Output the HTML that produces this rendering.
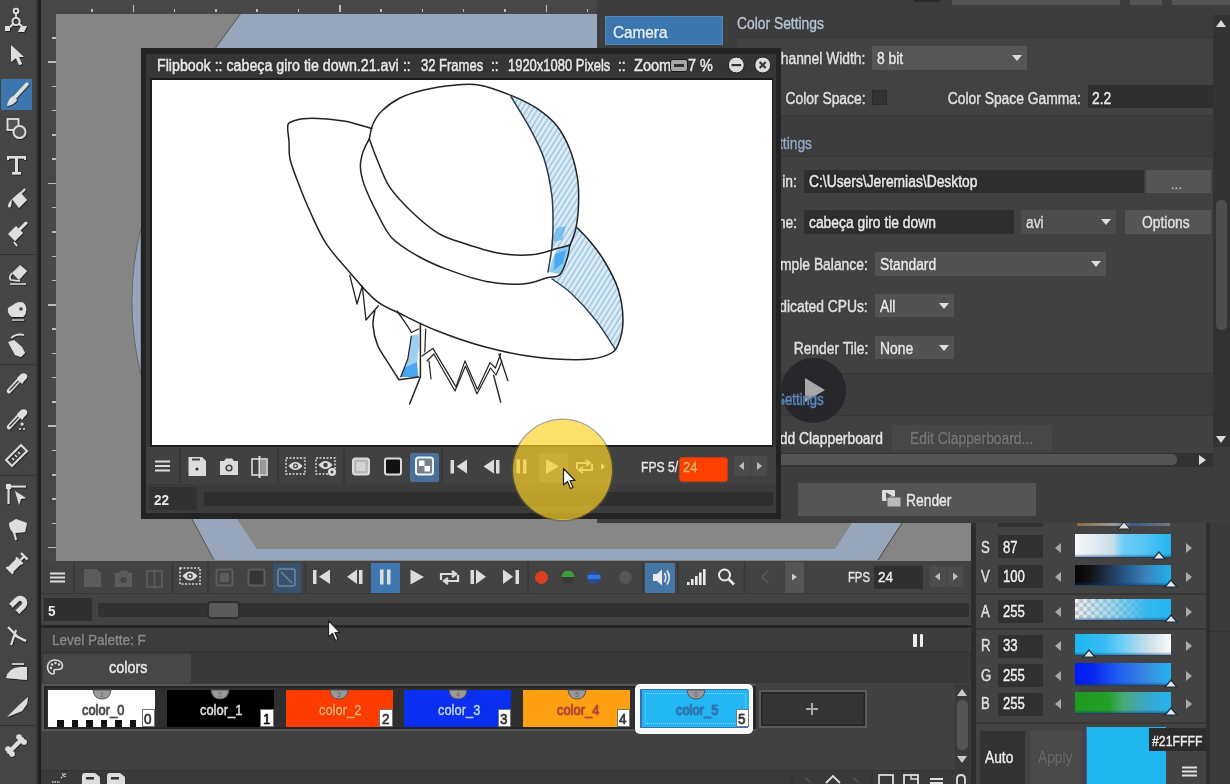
<!DOCTYPE html>
<html><head><meta charset="utf-8">
<style>
*{margin:0;padding:0;box-sizing:border-box}
html,body{width:1230px;height:784px;overflow:hidden;background:#3c3c3c;font-family:"Liberation Sans",sans-serif;color:#ddd}
.a{position:absolute}
.t{position:absolute;white-space:nowrap;line-height:1}
.s{position:absolute;white-space:nowrap;line-height:1;font-size:16px;transform:scaleX(.865);transform-origin:0 0;-webkit-text-stroke:.45px currentColor;text-shadow:0 0 1.5px rgba(0,0,0,.6)}
.r{position:absolute;white-space:nowrap;line-height:1;font-size:16px;transform:scaleX(.865);transform-origin:100% 0;-webkit-text-stroke:.45px currentColor;text-shadow:0 0 1.5px rgba(0,0,0,.6)}
</style></head>
<body>
<div class="a" style="left:0;top:0;width:36px;height:784px;background:#454545"></div>
<div class="a" style="left:37px;top:0;width:4.5px;height:784px;background:#2b2b2b"></div><div class="a" style="left:38.5px;top:0;width:2px;height:784px;background:#1f1f1f"></div>
<svg class="a" style="left:0;top:0" width="36" height="784" viewBox="0 0 36 784">
<defs><filter id="sh" x="-20%" y="-20%" width="140%" height="140%"><feDropShadow dx="0.6" dy="0.8" stdDeviation="0.5" flood-color="#111" flood-opacity="0.9"/></filter></defs>
<rect x="1" y="79" width="31" height="31" rx="1" fill="#3d75ad"/>
<g stroke="#2f2f2f" stroke-width="1"><line x1="0" y1="254.5" x2="35" y2="254.5"/><line x1="0" y1="364.5" x2="35" y2="364.5"/><line x1="0" y1="475.5" x2="35" y2="475.5"/><line x1="0" y1="725.5" x2="35" y2="725.5"/></g>
<g filter="url(#sh)" fill="#dedede" stroke="#dedede">
 <!-- animate -->
 <g fill="none" stroke-width="1.8"><circle cx="16" cy="11" r="2.3"/><circle cx="16" cy="21.5" r="3.6"/><line x1="16" y1="13.5" x2="16" y2="18"/><line x1="13" y1="24" x2="10" y2="27"/><line x1="19" y1="24" x2="22" y2="26"/></g>
 <rect x="5" y="26" width="5" height="5" fill="#dedede" stroke="none"/>
 <polygon points="21,26 27,26 24,32 18,32" stroke="none"/>
 <!-- select arrow -->
 <polygon points="11,45 24,57 19,57 22,64 19,65 16,58 11,62" stroke="none"/>
 <!-- brush -->
 <line x1="27" y1="84" x2="15" y2="97" stroke-width="3.5" stroke-linecap="round"/>
 <path d="M13 96 Q8 99 7 106 Q14 105 17 100 Z" stroke="none"/>
 <!-- geometric -->
 <rect x="7.5" y="119" width="11" height="11" fill="#555" stroke-width="1.8"/>
 <circle cx="19.5" cy="132" r="6" fill="#555" stroke-width="1.8"/>
 <!-- T -->
 <path d="M7 156 H26 V160 H24 V158.5 H18 V172 H21 V174.5 H12 V172 H15 V158.5 H9 V160 H7 Z" stroke="none"/>
 <!-- fill bucket -->
 <path d="M12 199 L20 192 L27 200 L19 208 Z" stroke="none"/>
 <line x1="17" y1="197" x2="25" y2="189" stroke-width="1.8"/>
 <path d="M12 199 Q8 203 8 206 Q9 209 11 206 Z" stroke="none"/>
 <!-- paint brush -->
 <path d="M8 234 L16 226 L23 233 L15 241 Z" stroke="none"/>
 <line x1="20" y1="229" x2="26" y2="223" stroke-width="3" stroke-linecap="round"/>
 <line x1="14" y1="242" x2="17" y2="246" stroke-width="1.5"/>
 <!-- eraser -->
 <path d="M12 273 L20 265 L27 271 L19 280 Z" stroke="none"/>
 <path d="M12 273 Q8 278 11 280 L20 281" fill="none" stroke-width="1.6"/>
 <line x1="10" y1="284" x2="26" y2="284" stroke-width="1.4"/>
 <!-- tape -->
 <path d="M8 308 L16 303 Q24 300 26 307 Q27 314 23 317 L12 317 Q7 314 8 308 Z" stroke="none"/>
 <circle cx="21" cy="309" r="1.8" fill="#444" stroke="none"/>
 <line x1="12" y1="320" x2="24" y2="320" stroke-width="1.2"/>
 <!-- smudge -->
 <path d="M8 342 L14 340 L22 347 L25 353 L21 357 L15 355 Z" stroke="none"/>
 <path d="M11 338 Q17 333 24 335" fill="none" stroke-width="1.6"/>
 <!-- picker 1 -->
 <path d="M9 391 L19 380" stroke-width="4.5" stroke-linecap="round" fill="none"/>
 <path d="M9.5 390.5 L18.5 381" stroke="#444" stroke-width="1.6" fill="none"/>
 <path d="M17 378 L21 374 Q25 372 27 375 Q28 378 24 381 L22 384 Z" stroke="none"/>
 <!-- picker 2 -->
 <path d="M9 427 L19 416" stroke-width="4.5" stroke-linecap="round" fill="none"/>
 <path d="M9.5 426.5 L18.5 417" stroke="#444" stroke-width="1.6" fill="none"/>
 <path d="M17 414 L21 410 Q25 408 27 411 Q28 414 24 417 L22 420 Z" stroke="none"/>
 <circle cx="22" cy="424" r="1.6" stroke="none"/><circle cx="20" cy="429" r="1" stroke="none"/><circle cx="24" cy="429" r="1" stroke="none"/>
 <!-- ruler -->
 <path d="M6 460 L21 445 L27 451 L12 466 Z" fill="none" stroke-width="1.8"/>
 <g stroke-width="1.2"><line x1="12" y1="458" x2="14" y2="460"/><line x1="15" y1="455" x2="17" y2="457"/><line x1="18" y1="452" x2="20" y2="454"/></g>
 <!-- control point editor -->
 <rect x="6" y="484" width="5" height="5" stroke="none"/>
 <line x1="8.5" y1="489" x2="8.5" y2="504" stroke-width="2"/>
 <line x1="11" y1="486.5" x2="26" y2="486.5" stroke-width="1.8"/>
 <polygon points="15,491 26,498 21,499 19,505" stroke="none"/>
 <!-- pinch -->
 <path d="M9 523 L16 519 L27 523 L25 532 L14 533 Q9 530 9 523 Z" stroke="none"/>
 <path d="M12 528 Q15 534 16 540" fill="none" stroke-width="1.8"/>
 <!-- pump -->
 <path d="M10 570 L19 561" stroke-width="7" stroke-linecap="butt"/>
 <path d="M6.5 567 L13 573.5 M16 557.5 L22.5 564" stroke-width="2.2"/>
 <path d="M20.5 560 L24 556.5 M21 553 L27.5 559.5" stroke-width="2.2"/>
<!-- magnet -->
 <path d="M10.5 606 L17 599.5 A4.6 4.6 0 0 1 23.5 606 L17 612.5" fill="none" stroke-width="5"/>
 <path d="M9 604.5 L12 607.5 M15.5 611 L18.5 614" stroke="#333" stroke-width="1.2"/>
<!-- bender -->
 <path d="M8 627 L18 637 M16 630 L11 645 M14 635 L26 641" fill="none" stroke-width="2"/>
 <!-- iron -->
 <path d="M6 678 Q8 668 20 667 L27 667 L27 680 Z" stroke="none"/>
 <line x1="12" y1="664" x2="24" y2="664" stroke-width="1.6"/>
 <!-- cutter -->
 <path d="M7 717 L19 705 L28 697 L27 704 L22 711 Z" stroke="none"/>
 <!-- bone -->
 <path d="M9 752 L22 739" stroke-width="4" stroke-linecap="round"/>
 <circle cx="8" cy="749" r="2.8" stroke="none"/><circle cx="12" cy="754" r="2.8" stroke="none"/>
 <circle cx="19" cy="737" r="2.8" stroke="none"/><circle cx="24" cy="742" r="2.8" stroke="none"/>
</g>
</svg>
<div class="a" style="left:41px;top:0;width:556px;height:14px;background:#474747"></div>
<div class="a" style="left:41px;top:14px;width:15px;height:547px;background:#474747"></div>
<div class="a" style="left:91.2px;top:8.5px;width:1.5px;height:3.5px;background:#bdbdbd"></div>
<div class="a" style="left:132.6px;top:5px;width:1.5px;height:7px;background:#bdbdbd"></div>
<div class="a" style="left:173.8px;top:8.5px;width:1.5px;height:3.5px;background:#bdbdbd"></div>
<div class="a" style="left:215.1px;top:8.5px;width:1.5px;height:3.5px;background:#bdbdbd"></div>
<div class="a" style="left:256.4px;top:8.5px;width:1.5px;height:3.5px;background:#bdbdbd"></div>
<div class="a" style="left:297.8px;top:8.5px;width:1.5px;height:3.5px;background:#bdbdbd"></div>
<div class="a" style="left:339.0px;top:5px;width:1.5px;height:7px;background:#bdbdbd"></div>
<div class="a" style="left:380.3px;top:8.5px;width:1.5px;height:3.5px;background:#bdbdbd"></div>
<div class="a" style="left:421.6px;top:8.5px;width:1.5px;height:3.5px;background:#bdbdbd"></div>
<div class="a" style="left:462.9px;top:8.5px;width:1.5px;height:3.5px;background:#bdbdbd"></div>
<div class="a" style="left:504.2px;top:8.5px;width:1.5px;height:3.5px;background:#bdbdbd"></div>
<div class="a" style="left:545.5px;top:5px;width:1.5px;height:7px;background:#bdbdbd"></div>
<div class="a" style="left:586.8px;top:8.5px;width:1.5px;height:3.5px;background:#bdbdbd"></div>
<div class="a" style="left:51.5px;top:37.0px;width:4px;height:1.5px;background:#bdbdbd"></div>
<div class="a" style="left:48.0px;top:61.2px;width:7.5px;height:1.5px;background:#bdbdbd"></div>
<div class="a" style="left:51.5px;top:85.5px;width:4px;height:1.5px;background:#bdbdbd"></div>
<div class="a" style="left:51.5px;top:109.8px;width:4px;height:1.5px;background:#bdbdbd"></div>
<div class="a" style="left:51.5px;top:134.1px;width:4px;height:1.5px;background:#bdbdbd"></div>
<div class="a" style="left:51.5px;top:158.4px;width:4px;height:1.5px;background:#bdbdbd"></div>
<div class="a" style="left:48.0px;top:182.6px;width:7.5px;height:1.5px;background:#bdbdbd"></div>
<div class="a" style="left:51.5px;top:206.9px;width:4px;height:1.5px;background:#bdbdbd"></div>
<div class="a" style="left:51.5px;top:231.2px;width:4px;height:1.5px;background:#bdbdbd"></div>
<div class="a" style="left:51.5px;top:255.5px;width:4px;height:1.5px;background:#bdbdbd"></div>
<div class="a" style="left:51.5px;top:279.8px;width:4px;height:1.5px;background:#bdbdbd"></div>
<div class="a" style="left:48.0px;top:304.0px;width:7.5px;height:1.5px;background:#bdbdbd"></div>
<div class="a" style="left:51.5px;top:328.3px;width:4px;height:1.5px;background:#bdbdbd"></div>
<div class="a" style="left:51.5px;top:352.6px;width:4px;height:1.5px;background:#bdbdbd"></div>
<div class="a" style="left:51.5px;top:376.9px;width:4px;height:1.5px;background:#bdbdbd"></div>
<div class="a" style="left:51.5px;top:401.2px;width:4px;height:1.5px;background:#bdbdbd"></div>
<div class="a" style="left:48.0px;top:425.4px;width:7.5px;height:1.5px;background:#bdbdbd"></div>
<div class="a" style="left:51.5px;top:449.7px;width:4px;height:1.5px;background:#bdbdbd"></div>
<div class="a" style="left:51.5px;top:474.0px;width:4px;height:1.5px;background:#bdbdbd"></div>
<div class="a" style="left:51.5px;top:498.3px;width:4px;height:1.5px;background:#bdbdbd"></div>
<div class="a" style="left:51.5px;top:522.6px;width:4px;height:1.5px;background:#bdbdbd"></div>
<div class="a" style="left:48.0px;top:546.8px;width:7.5px;height:1.5px;background:#bdbdbd"></div>
<div class="a" style="left:56px;top:14px;width:915px;height:547px;background:#858585;overflow:hidden">
<svg class="a" style="left:0;top:0" width="915" height="547">
<polygon points="185,-1 150,47 150,400 136,505 158,546 822,546 846,509 846,-1" fill="#98a6bb"/>
<polygon points="150,400 181,505 201,535 779,535 796,509 796,400" fill="#878787"/>
<path d="M185,-1 L150,47" stroke="#555" stroke-width="1" fill="none"/>
<path d="M136,505 L158,546" stroke="#555" stroke-width="1" fill="none"/>
<path d="M822,546 L846,509" stroke="#444" stroke-width="1" fill="none"/>
<path d="M85,214 Q67,287 85,361 Z" fill="#98a6bb" stroke="#5a5a5a" stroke-width="0.8"/>
</svg></div><div class="a" style="left:597px;top:0;width:633px;height:523px;background:#3d3d3d"></div>
<!-- top partial widgets -->
<div class="a" style="left:952px;top:0;width:168px;height:5px;background:#555;border-radius:0 0 2px 2px"></div>
<div class="a" style="left:1130px;top:0;width:32px;height:5px;background:#555"></div>
<div class="a" style="left:1172px;top:0;width:58px;height:5px;background:#555"></div>
<div class="a" style="left:914px;top:0;width:26px;height:2px;background:#2a2a2a"></div>
<!-- camera button -->
<div class="a" style="left:605px;top:16px;width:118px;height:29px;background:#3b76ae;border:1px solid #4f87bd"></div>
<div class="s" style="left:613px;top:24px;color:#dfeefa;font-size:17px;transform:scaleX(.9)">Camera</div>
<div class="s" style="left:737px;top:16px;color:#b4c2d0">Color Settings</div>
<!-- box 1 -->
<div class="a" style="left:737px;top:37px;width:476px;height:79px;background:#424242;border-top:1px solid #363636;border-bottom:1px solid #363636"></div>
<div class="r" style="right:365px;top:51px;color:#e0e0e0">Channel Width:</div>
<div class="a" style="left:872px;top:46px;width:155px;height:24px;background:#565656"></div>
<div class="s" style="left:877px;top:51px;color:#e8e8e8">8 bit</div>
<svg class="a" style="left:1012px;top:55px" width="10" height="6"><polygon points="0,0 10,0 5,6" fill="#ddd"/></svg>
<div class="r" style="right:365px;top:91px;color:#e0e0e0">Color Space:</div>
<div class="a" style="left:872px;top:90px;width:15px;height:15px;background:#333;border:1px solid #2c2c2c"></div>
<div class="r" style="right:149px;top:91px;color:#e0e0e0">Color Space Gamma:</div>
<div class="a" style="left:1088px;top:85px;width:125px;height:23px;background:#2f2f2f"></div>
<div class="s" style="left:1092px;top:91px;color:#e8e8e8">2.2</div>
<!-- file settings header -->
<div class="r" style="right:418px;top:136px;color:#93a8c0">File Settings</div>
<div class="a" style="left:737px;top:156px;width:476px;height:218px;background:#414141;border-top:1px solid #363636;border-bottom:1px solid #363636"></div>
<div class="r" style="right:433px;top:174px;color:#e0e0e0">Save in:</div>
<div class="a" style="left:804px;top:170px;width:340px;height:23px;background:#2e2e2e"></div>
<div class="s" style="left:809px;top:174px;color:#e8e8e8">C:\Users\Jeremias\Desktop</div>
<div class="a" style="left:1146px;top:170px;width:65px;height:23px;background:#555"></div>
<div class="t" style="left:1171px;top:178px;font-size:13px;color:#ddd">...</div>
<div class="r" style="right:433px;top:215px;color:#e0e0e0">Name:</div>
<div class="a" style="left:804px;top:210px;width:210px;height:24px;background:#2e2e2e"></div>
<div class="s" style="left:809px;top:215px;color:#e8e8e8">cabeça giro tie down</div>
<div class="a" style="left:1021px;top:210px;width:95px;height:24px;background:#4c4c4c"></div>
<div class="s" style="left:1026px;top:215px;color:#ddd">avi</div>
<svg class="a" style="left:1101px;top:219px" width="10" height="6"><polygon points="0,0 10,0 5,6" fill="#ddd"/></svg>
<div class="a" style="left:1125px;top:210px;width:86px;height:24px;background:#555"></div>
<div class="s" style="left:1142px;top:215px;color:#e0e0e0">Options</div>
<div class="r" style="right:362px;top:257px;color:#e0e0e0">Resample Balance:</div>
<div class="a" style="left:875px;top:252px;width:231px;height:24px;background:#525252"></div>
<div class="s" style="left:880px;top:257px;color:#e8e8e8">Standard</div>
<svg class="a" style="left:1091px;top:261px" width="10" height="6"><polygon points="0,0 10,0 5,6" fill="#ddd"/></svg>
<div class="r" style="right:362px;top:299px;color:#e0e0e0">Dedicated CPUs:</div>
<div class="a" style="left:875px;top:294px;width:79px;height:23px;background:#525252"></div>
<div class="s" style="left:880px;top:299px;color:#e8e8e8">All</div>
<svg class="a" style="left:939px;top:303px" width="10" height="6"><polygon points="0,0 10,0 5,6" fill="#ddd"/></svg>
<div class="r" style="right:362px;top:341px;color:#e0e0e0">Render Tile:</div>
<div class="a" style="left:875px;top:336px;width:79px;height:23px;background:#525252"></div>
<div class="s" style="left:880px;top:341px;color:#e8e8e8">None</div>
<svg class="a" style="left:939px;top:345px" width="10" height="6"><polygon points="0,0 10,0 5,6" fill="#ddd"/></svg>
<div class="r" style="right:407px;top:392px;color:#7f9bbb">More Settings</div>
<div class="a" style="left:737px;top:415px;width:476px;height:40px;background:#414141;border-top:1px solid #363636"></div>
<div class="r" style="right:347px;top:431px;color:#e6e6e6">Add Clapperboard</div>
<div class="a" style="left:892px;top:425px;width:160px;height:25px;background:#474747"></div>
<div class="s" style="left:910px;top:431px;color:#777">Edit Clapperboard...</div>
<!-- vertical scrollbar -->
<div class="a" style="left:1213px;top:15px;width:17px;height:432px;background:#333"></div>
<svg class="a" style="left:1216px;top:20px" width="10" height="7"><polygon points="0,7 10,7 5,0" fill="#ddd"/></svg>
<svg class="a" style="left:1216px;top:436px" width="10" height="7"><polygon points="0,0 10,0 5,7" fill="#ddd"/></svg>
<div class="a" style="left:1216px;top:200px;width:11px;height:130px;background:#4e4e4e;border-radius:5px"></div>
<!-- horizontal scrollbar -->
<div class="a" style="left:737px;top:453px;width:476px;height:14px;background:#333"></div>
<div class="a" style="left:775px;top:454px;width:402px;height:11px;background:#555;border-radius:5px"></div>
<svg class="a" style="left:1199px;top:455px" width="7" height="10"><polygon points="0,0 7,5 0,10" fill="#ddd"/></svg>
<!-- render button -->
<div class="a" style="left:798px;top:483px;width:238px;height:33px;background:#555"></div>
<svg class="a" style="left:881px;top:489px" width="22" height="20"><rect x="1" y="1" width="13" height="11" rx="1" fill="#ddd"/><polygon points="5,3.5 11,6.5 5,9.5" fill="#555"/><rect x="6" y="8" width="14" height="10" rx="1" fill="#bbb" stroke="#555" stroke-width="1"/></svg>
<div class="s" style="left:906px;top:493px;color:#e8e8e8">Render</div>
<!-- flipbook window -->
<div class="a" style="left:141px;top:48px;width:640px;height:471px;background:#232323"></div>
<div class="a" style="left:146px;top:54px;width:630px;height:459px;background:#363636"></div>
<div class="a" style="left:150px;top:78px;width:623px;height:369px;background:#1c1c1c"></div>
<div class="a" style="left:152px;top:80px;width:620px;height:365px;background:#fff"></div>
<div class="a" style="left:146px;top:447px;width:630px;height:37px;background:#414141"></div>
<div class="a" style="left:146px;top:484px;width:630px;height:29px;background:#3c3c3c"></div>
<div class="a" style="left:149px;top:487px;width:48px;height:23px;background:#323232"></div>
<div class="a" style="left:204px;top:492px;width:569px;height:14px;background:#2f2f2f"></div>
<div class="t" style="left:154px;top:492px;font-size:15px;font-weight:bold;color:#e8e8e8;transform:scaleX(.9);transform-origin:0 0">22</div>
<!-- title -->
<div class="s" style="left:156.5px;top:57.5px;color:#e8e8e8;-webkit-text-stroke:.5px #e8e8e8;transform:scaleX(.888)">Flipbook :: cabeça giro tie down.21.avi</div>
<div class="s" style="left:403px;top:57.5px;color:#e8e8e8;-webkit-text-stroke:.5px #e8e8e8">::</div>
<div class="s" style="left:420.5px;top:57.5px;color:#e8e8e8;-webkit-text-stroke:.5px #e8e8e8;transform:scaleX(.813)">32 Frames</div>
<div class="s" style="left:490.5px;top:57.5px;color:#e8e8e8;-webkit-text-stroke:.5px #e8e8e8">::</div>
<div class="s" style="left:507.5px;top:57.5px;color:#e8e8e8;-webkit-text-stroke:.5px #e8e8e8;transform:scaleX(.81)">1920x1080 Pixels</div>
<div class="s" style="left:617.5px;top:57.5px;color:#e8e8e8;-webkit-text-stroke:.5px #e8e8e8">::</div>
<div class="s" style="left:633.5px;top:57.5px;color:#e8e8e8;-webkit-text-stroke:.5px #e8e8e8;transform:scaleX(.91)">Zoom</div>
<div class="s" style="left:687.5px;top:57.5px;color:#e8e8e8;-webkit-text-stroke:.5px #e8e8e8;transform:scaleX(.9)">7 %</div>
<div class="a" style="left:670px;top:59px;width:18px;height:13px;background:#a8a8a8;border:1.5px solid #1e1e1e;border-radius:3px"></div>
<div class="a" style="left:674px;top:64px;width:10px;height:3px;background:#333"></div>
<svg class="a" style="left:726px;top:55px" width="48" height="20">
 <circle cx="10.3" cy="10" r="8" fill="#dadada" stroke="#1a1a1a" stroke-width="1"/>
 <rect x="5.5" y="9" width="9.6" height="2.2" fill="#333"/>
 <circle cx="36.7" cy="10" r="8" fill="#dadada" stroke="#1a1a1a" stroke-width="1"/>
 <path d="M33.7 7 L39.7 13 M39.7 7 L33.7 13" stroke="#333" stroke-width="2.2"/>
</svg>
<!-- toolbar separators -->
<div class="a" style="left:179px;top:449px;width:2px;height:34px;background:#363636"></div>
<div class="a" style="left:277px;top:449px;width:2px;height:34px;background:#363636"></div>
<div class="a" style="left:343px;top:449px;width:2px;height:34px;background:#363636"></div>
<div class="a" style="left:441px;top:449px;width:2px;height:34px;background:#363636"></div>
<div class="a" style="left:409.5px;top:453px;width:29.5px;height:29px;background:#4a6f9a;border-radius:2px"></div>
<div class="a" style="left:539px;top:453px;width:29px;height:29px;background:#5a5a5a"></div>
<svg class="a" style="left:146px;top:447px" width="630" height="37">
<g fill="#dcdcdc" stroke="#dcdcdc">
 <!-- hamburger -->
 <g stroke-width="2"><line x1="9" y1="14.5" x2="24" y2="14.5"/><line x1="9" y1="19" x2="24" y2="19"/><line x1="9" y1="23.5" x2="24" y2="23.5"/></g>
 <!-- save -->
 <path d="M42.5 10 H56 L60 14 V29 H42.5 Z" stroke="none"/>
 <rect x="46" y="11.5" width="8" height="2" fill="#414141" stroke="none"/>
 <circle cx="51" cy="22" r="1.6" fill="#333" stroke="none"/>
 <!-- camera -->
 <path d="M74 14 H78 L80 11.5 H86 L88 14 H92 V28 H74 Z" stroke="none"/>
 <circle cx="83" cy="21" r="3.6" fill="#444" stroke="none"/><circle cx="83" cy="21" r="2" fill="#dcdcdc" stroke="none"/>
 <!-- compare -->
 <rect x="106" y="12" width="15" height="16" fill="none" stroke-width="1.6"/>
 <line x1="113.5" y1="9" x2="113.5" y2="31" stroke-width="2"/>
 <rect x="115" y="13" width="5" height="14" fill="#999" stroke="none"/>
 <!-- eye dashed -->
 <rect x="140" y="11" width="19" height="16" fill="none" stroke-width="1.4" stroke-dasharray="2 1.5"/>
 <path d="M142.5 19 Q149.5 11 156.5 19 Q149.5 27 142.5 19 Z" stroke="none"/>
 <circle cx="149.5" cy="19" r="2.5" fill="#444" stroke="none"/><circle cx="149.5" cy="19" r="1.2" stroke="none"/>
 <!-- eye2 dashed -->
 <rect x="170" y="11" width="19" height="16" fill="none" stroke-width="1.4" stroke-dasharray="2 1.5"/>
 <path d="M172.5 18 Q179.5 10 186.5 18 Q179.5 26 172.5 18 Z" stroke="none"/>
 <circle cx="179.5" cy="18" r="2.3" fill="#444" stroke="none"/>
 <circle cx="186" cy="25" r="4" stroke="none"/><circle cx="186" cy="25" r="1.5" fill="#444" stroke="none"/>
 <!-- square gray -->
 <rect x="207" y="11.5" width="16" height="16" rx="2.5" fill="#b8b8b8" stroke-width="2"/><rect x="210.5" y="15" width="9" height="9" fill="#d4d4d4" stroke="none"/>
 <!-- square black -->
 <rect x="239" y="11.5" width="16" height="16" rx="2" fill="#111" stroke-width="2"/>
 <!-- checker (in blue) -->
 <rect x="270" y="10.5" width="17" height="17" rx="2.5" fill="#7a8088" stroke="#eaf4ff" stroke-width="2"/>
 <rect x="273" y="13.5" width="5.5" height="5.5" fill="#fff" stroke="none"/><rect x="278.5" y="19" width="5.5" height="5.5" fill="#fff" stroke="none"/>
 <!-- first frame -->
 <rect x="304.5" y="13" width="3.5" height="13.5" stroke="none"/>
 <polygon points="321,12.5 321,26.5 310.5,19.5" stroke="none"/>
 <!-- prev frame -->
 <polygon points="348,12.5 348,26.5 337.5,19.5" stroke="none"/>
 <rect x="350" y="13" width="3.5" height="13.5" stroke="none"/>
 <!-- pause -->
 <rect x="370.5" y="12.5" width="3.5" height="14" stroke="none"/><rect x="377" y="12.5" width="3.5" height="14" stroke="none"/>
 <!-- play -->
 <polygon points="400,12 400,27 413,19.5" stroke="none"/>
 <!-- loop -->
 <path d="M431 22 V16 H443 M440 13 L444 16 L440 19 M446 17 V23 H434 M437 26 L433 23 L437 20" fill="none" stroke-width="2"/>
 <!-- small next -->
 <polygon points="455,16 455,23 459,19.5" stroke="none"/>
</g>
</svg>
<!-- FPS -->
<div class="s" style="left:640.5px;top:459px;color:#e4e4e4;font-size:15px;transform:scaleX(.81)">FPS 5/</div>
<div class="a" style="left:678.5px;top:456.5px;width:49px;height:25px;background:#ff4000;border:1px solid #c83a14;border-radius:3px"></div>
<div class="s" style="left:683px;top:459px;color:#f0b860;font-size:15px">24</div>
<div class="a" style="left:734px;top:456px;width:16px;height:20px;background:#4a4a4a"></div>
<div class="a" style="left:751px;top:456px;width:16px;height:20px;background:#4a4a4a"></div>
<svg class="a" style="left:734px;top:456px" width="33" height="20"><polygon points="10,6 10,14 5,10" fill="#bbb"/><polygon points="23,6 23,14 28,10" fill="#bbb"/></svg>
<svg class="a" style="left:152px;top:80px" width="620" height="365" viewBox="152 80 620 365">
<defs>
<pattern id="hatch" width="4.5" height="4.5" patternUnits="userSpaceOnUse" patternTransform="rotate(-58)">
<rect width="4.5" height="4.5" fill="#dcebf5"/><line x1="0" y1="1" x2="4.5" y2="1" stroke="#9cc6e2" stroke-width="1.5"/>
</pattern>
</defs>
<g fill="url(#hatch)" stroke="none">
<path d="M511.0,95.4 C515.2,97.5 528.8,103.1 536.5,108.2 C544.2,113.3 551.5,119.2 557.0,126.0 C562.5,132.8 566.3,140.5 569.7,149.0 C573.1,157.5 575.8,168.1 577.3,177.0 C578.8,185.9 578.8,194.1 578.6,202.6 C578.4,211.1 577.5,220.8 576.0,228.0 C574.5,235.2 570.8,243.0 569.7,246.0 L569.7,246.0 C566.7,246.4 554.6,251.5 551.8,248.5 C549.0,245.5 553.0,236.9 553.0,228.0 C553.0,219.1 553.3,206.5 551.8,195.0 C550.3,183.5 547.6,169.9 544.2,159.2 C540.8,148.5 536.9,141.4 531.4,131.0 C525.9,120.6 514.4,102.4 511.0,96.7 Z"/>
<path d="M569.7,246.0 C571.0,243.0 574.1,229.0 577.3,228.0 C580.5,227.0 584.4,234.8 588.8,240.0 C593.1,245.2 598.5,251.4 603.4,259.5 C608.3,267.6 614.7,278.6 618.0,288.8 C621.3,299.0 623.0,311.1 623.0,320.5 C623.0,329.9 619.2,340.1 618.0,345.0 C616.8,349.9 616.0,349.0 615.6,349.8 L615.6,349.8 C612.3,344.9 603.3,329.9 596.0,320.5 C588.7,311.1 579.0,300.6 571.7,293.7 C564.4,286.8 555.3,281.4 552.0,279.0 L559.5,275 L566.8,259.5 Z"/>
</g>
<path d="M557,250 L569,246 L566,260 L560,274 L549,272 L553,258 Z" fill="#8ccaf0"/>
<path d="M555,254 L566,250 L563,263 L554,270 Z" fill="#49a8f0"/>
<path d="M556,228 L566,226 L562,240 L553,242 Z" fill="#6ab8ee" opacity=".8"/>
<path d="M411,336 L418.6,334 L419,345 L416.8,364.6 L418.6,377 L400.7,377 L407.8,359 Z" fill="#9ccff0"/>
<path d="M404,368 L417,362 L418,377 L401,377 Z" fill="#4aa6ee"/>
<g fill="none" stroke="#222" stroke-width="1.5" stroke-linecap="round" stroke-linejoin="round">
<path d="M371.8,128.6 C367.1,127.3 354.4,122.7 343.8,121.0 C333.2,119.3 316.9,118.2 308.0,118.4 C299.1,118.6 293.6,120.6 290.2,122.2 C286.8,123.8 287.9,124.8 287.7,128.0 C287.5,131.2 288.6,136.1 289.0,141.3 C289.4,146.5 288.5,152.2 290.0,159.0 C291.5,165.8 294.5,173.0 297.9,182.0 C301.3,191.0 305.9,202.6 310.6,212.8 C315.3,223.0 319.6,233.6 326.0,243.4 C332.4,253.2 340.6,261.9 348.9,271.4 C357.2,280.9 367.0,293.3 375.7,300.4 C384.4,307.5 390.7,308.9 401.0,314.0 C411.3,319.1 423.4,325.4 437.6,331.0 C451.8,336.6 470.1,343.0 486.3,347.3 C502.5,351.6 518.7,355.0 535.0,357.0 C551.3,359.0 571.8,359.9 584.0,359.5 C596.2,359.1 602.6,357.0 608.3,354.6 C614.0,352.2 615.5,350.7 618.0,345.0 C620.5,339.3 623.0,329.9 623.0,320.5 C623.0,311.1 621.3,299.0 618.0,288.8 C614.7,278.6 608.3,267.6 603.4,259.5 C598.5,251.4 593.1,245.2 588.8,240.0 C584.4,234.8 579.2,230.0 577.3,228.0"/>
<path d="M369.3,138.8 C369.9,136.3 370.9,128.7 373.0,124.0 C375.1,119.3 377.5,115.0 382.0,110.7 C386.5,106.4 393.2,101.4 400.0,98.0 C406.8,94.6 414.0,92.4 422.9,90.3 C431.8,88.2 444.0,86.0 453.5,85.2 C463.0,84.4 470.4,83.5 480.0,85.2 C489.6,86.9 501.6,91.6 511.0,95.4 C520.4,99.2 528.8,103.1 536.5,108.2 C544.2,113.3 551.5,119.2 557.0,126.0 C562.5,132.8 566.3,140.5 569.7,149.0 C573.1,157.5 575.8,168.1 577.3,177.0 C578.8,185.9 578.8,194.1 578.6,202.6 C578.4,211.1 577.5,220.8 576.0,228.0 C574.5,235.2 570.8,243.0 569.7,246.0"/>
<path d="M369.3,138.8 C370.6,142.2 373.6,151.1 377.0,159.2 C380.4,167.3 383.8,178.3 389.7,187.2 C395.6,196.1 404.6,205.1 412.7,212.8 C420.8,220.5 430.1,228.3 438.0,233.2 C445.9,238.1 450.0,238.7 460.0,242.0 C470.0,245.3 486.1,250.9 498.0,253.0 C509.9,255.1 521.6,255.6 531.4,254.8 C541.2,254.1 550.6,250.1 557.0,248.5 C563.4,246.9 567.6,245.6 569.7,245.0"/>
<path d="M369.3,138.8 C368.2,141.0 364.5,147.3 363.0,152.0 C361.5,156.7 360.2,161.4 360.4,166.8 C360.6,172.2 361.4,177.0 364.2,184.7 C367.0,192.4 372.3,203.9 377.0,212.8 C381.7,221.7 385.4,231.1 392.2,238.3 C399.0,245.5 408.9,250.9 417.8,256.0 C426.7,261.1 434.4,264.6 445.8,268.9 C457.2,273.1 473.4,279.0 486.3,281.5 C499.2,284.0 512.8,284.6 523.0,284.0 C533.2,283.4 541.2,279.3 547.3,277.8 C553.4,276.3 556.2,278.1 559.5,275.0 C562.8,271.9 565.1,264.3 566.8,259.5 C568.5,254.7 569.2,248.2 569.7,246.0"/>
<path d="M511.0,96.7 C514.4,102.4 525.9,120.6 531.4,131.0 C536.9,141.4 540.8,148.5 544.2,159.2 C547.6,169.9 550.3,183.5 551.8,195.0 C553.3,206.5 553.0,219.1 553.0,228.0 C553.0,236.9 552.6,241.2 551.8,248.5 C551.0,255.8 548.6,268.1 548.0,272.0" stroke="#2a3a4a"/>
<path d="M552.0,279.0 C555.3,281.4 564.4,286.8 571.7,293.7 C579.0,300.6 588.7,311.1 596.0,320.5 C603.3,329.9 612.3,344.9 615.6,349.8" stroke="#2a3a4a" stroke-width="1.3"/>
<path d="M349.8,275.4 L357,304 L362.3,286 L366,320 L378.4,305.7" stroke-width="1.3"/>
<path d="M374.8,311.0 C374.5,313.4 372.6,319.7 373.0,325.4 C373.4,331.1 375.0,338.8 377.5,345.0 C380.0,351.2 384.6,357.1 388.2,362.9 C391.8,368.7 397.2,377.0 399.0,379.8 L418.6,377"/>
<path d="M397,311 C402,318 408,326 411.4,332.5 L418.6,329" stroke-width="1.3"/>
<path d="M411.4,336 L407.8,359 L400.7,377" stroke-width="1.2"/>
<path d="M420.4,323.6 L420.4,377 L409.6,404" stroke-width="1.5"/>
<path d="M425.7,329 L424.8,352" stroke-width="1.2"/>
<path d="M422,356 L432.9,348.4 L456,386.9 L465,360.9 L477.5,389.4 L490,362.6 L495.4,368 L500.7,353.7" stroke-width="1.2"/>
<path d="M427,361 L433.9,354 L455,391 L465.5,366 L477,394 L490.5,368 L496,375 L502,361" stroke-width="1.2"/>
<path d="M429,361 L431,379" stroke-width="1.2"/>
<path d="M499,354 L507.9,380.7" stroke-width="1.3"/>
<path d="M493.6,375.4 L500.7,402" stroke-width="1.4"/>
</g>
</svg><!-- viewer toolbar -->
<div class="a" style="left:41px;top:561px;width:930px;height:33px;background:#434343;border-bottom:1px solid #393939"></div>
<div class="a" style="left:41px;top:594px;width:930px;height:31px;background:#434343"></div>
<div class="a" style="left:44px;top:598px;width:48px;height:23px;background:#303030"></div>
<div class="t" style="left:48px;top:603px;font-size:15px;font-weight:bold;color:#e8e8e8;transform:scaleX(.9);transform-origin:0 0">5</div>
<div class="a" style="left:98px;top:603px;width:871px;height:14px;background:#323232"></div>
<div class="a" style="left:207px;top:600.5px;width:33px;height:18px;background:#5a5a5a;border:2px solid #2e2e2e;border-radius:4px"></div>
<div class="a" style="left:41px;top:625px;width:930px;height:3px;background:#282828"></div>
<g></g>
<svg class="a" style="left:41px;top:561px" width="930" height="33">
<g stroke="#363636" stroke-width="1.5"><line x1="33" y1="1" x2="33" y2="32"/><line x1="131.5" y1="1" x2="131.5" y2="32"/><line x1="167" y1="1" x2="167" y2="32"/><line x1="264.5" y1="1" x2="264.5" y2="32"/><line x1="487" y1="1" x2="487" y2="32"/><line x1="602" y1="1" x2="602" y2="32"/><line x1="637" y1="1" x2="637" y2="32"/><line x1="703.5" y1="1" x2="703.5" y2="32"/></g>
<rect x="232" y="2" width="28" height="30" fill="#3b526c"/>
<rect x="330" y="2" width="29" height="30" fill="#3f78b0"/>
<rect x="604" y="2" width="30" height="30" fill="#4676a6"/>
<rect x="744" y="1" width="19" height="31" fill="#555"/>
<g stroke-width="2" stroke="#dcdcdc"><line x1="9" y1="12.5" x2="24" y2="12.5"/><line x1="9" y1="16.5" x2="24" y2="16.5"/><line x1="9" y1="20.5" x2="24" y2="20.5"/></g>
<g fill="#5c5c5c" stroke="#5c5c5c">
 <path d="M43 8 H56 L60 12 V26 H43 Z" stroke="none"/>
 <path d="M74 12 H78 L80 9.5 H86 L88 12 H91 V26 H74 Z" stroke="none"/><circle cx="82.5" cy="19" r="3" fill="#434343" stroke="none"/>
 <rect x="106" y="10" width="15" height="16" fill="none" stroke-width="1.6"/><line x1="113.5" y1="8" x2="113.5" y2="28" stroke-width="1.6"/>
 <rect x="175.5" y="8.5" width="16" height="16" rx="1.5" fill="none" stroke-width="2"/><rect x="179" y="12" width="9" height="9" stroke="none"/>
 <rect x="207.5" y="8.5" width="16" height="16" rx="2" fill="#363636" stroke-width="2"/>
 <rect x="237" y="8" width="17" height="17" rx="2" fill="none" stroke="#6a86a6" stroke-width="1.6"/><path d="M240 11 L251 22" stroke="#6a86a6" stroke-width="1.4"/>
</g>
<g fill="#dcdcdc" stroke="#dcdcdc">
 <rect x="139" y="7" width="20" height="16" fill="none" stroke-width="1.5" stroke-dasharray="2 1.5"/>
 <path d="M141.5 15 Q149 6 156.5 15 Q149 24 141.5 15 Z" stroke="none"/>
 <circle cx="149" cy="15" r="2.8" fill="#434343" stroke="none"/><circle cx="149" cy="15" r="1.3" stroke="none"/>
 <rect x="272" y="9" width="3.5" height="14" stroke="none"/><polygon points="289,8.5 289,23 278,15.7" stroke="none"/>
 <polygon points="316,8.5 316,23 306,15.7" stroke="none"/><rect x="318" y="9" width="3.5" height="14" stroke="none"/>
 <rect x="339" y="8.5" width="3.5" height="15" stroke="none"/><rect x="346" y="8.5" width="3.5" height="15" stroke="none"/>
 <polygon points="369.5,8.5 369.5,23.5 383,16" stroke="none"/>
 <path d="M400 19 V13 H414 M411 10 L415 13 L411 16 M417 14 V20 H404 M407 23 L403 20 L407 17" fill="none" stroke-width="2.2"/>
 <rect x="429.5" y="9" width="3.5" height="14" stroke="none"/><polygon points="435,8.5 435,23 445,15.7" stroke="none"/>
 <polygon points="462,8.5 462,23 472,15.7" stroke="none"/><rect x="474.5" y="9" width="3.5" height="14" stroke="none"/>
</g>
<circle cx="500.5" cy="16.5" r="6.5" fill="#d84020"/>
<circle cx="527" cy="16.5" r="6.5" fill="#3a3a3a"/><path d="M520.5 16 A6.5 6.5 0 0 1 533.5 16 Z" fill="#3c9e3c"/>
<circle cx="553" cy="16.5" r="6.5" fill="#2a4a9a"/><rect x="546.5" y="14" width="13" height="4" fill="#2e78e0"/>
<circle cx="584.5" cy="16.5" r="6.5" fill="#575757"/>
<g fill="#eaeaea" stroke="#eaeaea">
 <path d="M612 13 H616 L621 8.5 V24.5 L616 20 H612 Z" stroke="none"/>
 <path d="M623.5 12 Q626 16.5 623.5 21 M626 9.5 Q630.5 16.5 626 23.5" fill="none" stroke-width="1.6"/>
 <rect x="646" y="21" width="2.6" height="3" stroke="none"/><rect x="650" y="18" width="2.6" height="6" stroke="none"/><rect x="654" y="15" width="2.6" height="9" stroke="none"/><rect x="658" y="11.5" width="2.6" height="12.5" stroke="none"/><rect x="662" y="8" width="2.6" height="16" stroke="none"/>
 <circle cx="683.5" cy="14" r="5.5" fill="none" stroke-width="2"/><line x1="687.5" y1="18" x2="693" y2="23.5" stroke-width="2.5"/>
</g>
<path d="M727 10 L721 16 L727 22" fill="none" stroke="#5a5a5a" stroke-width="1.5"/>
<polygon points="751,12.5 751,19.5 756,16" fill="#ccc"/>
</svg>
<div class="s" style="left:848px;top:569px;color:#e4e4e4;font-size:15px;transform:scaleX(.75)">FPS</div>
<div class="a" style="left:874px;top:566px;width:49px;height:23px;background:#303030"></div>
<div class="s" style="left:878px;top:569px;color:#eee;font-size:15px;transform:scaleX(.9)">24</div>
<div class="a" style="left:930px;top:566px;width:16px;height:21px;background:#4c4c4c"></div>
<div class="a" style="left:947px;top:566px;width:16px;height:21px;background:#4c4c4c"></div>
<svg class="a" style="left:930px;top:566px" width="33" height="21"><polygon points="10,6.5 10,14.5 5,10.5" fill="#bbb"/><polygon points="23,6.5 23,14.5 28,10.5" fill="#bbb"/></svg>
<div class="a" style="left:41px;top:628px;width:930px;height:156px;background:#3d3d3d"></div>
<div class="a" style="left:41px;top:651px;width:930px;height:1px;background:#343434"></div>
<div class="s" style="left:52px;top:632px;color:#8a8a8a;font-size:15px;transform:scaleX(.9)">Level Palette: F</div>
<div class="a" style="left:913px;top:634px;width:3.5px;height:13px;background:#eee;border-radius:1px"></div><div class="a" style="left:919.5px;top:634px;width:3.5px;height:13px;background:#eee;border-radius:1px"></div>
<div class="a" style="left:41px;top:652px;width:930px;height:31px;background:#383838"></div>
<div class="a" style="left:43px;top:654px;width:148px;height:29px;background:#474747"></div>
<svg class="a" style="left:46px;top:658px" width="18" height="18"><path d="M9 2 C4 2 1.5 5.5 1.5 9 C1.5 13 4 16 7 16 C8.5 16 8.5 14.5 8 13.5 C7.5 12.5 8.5 11.5 9.5 11.5 L12 11.5 C14.5 11.5 16.5 10 16.5 7.5 C16.5 4.5 13 2 9 2 Z" fill="none" stroke="#ddd" stroke-width="1.6"/><circle cx="6" cy="6.5" r="1.2" fill="#ddd"/><circle cx="9.5" cy="5" r="1.2" fill="#ddd"/><circle cx="13" cy="6.5" r="1.2" fill="#ddd"/><circle cx="5" cy="10" r="1.2" fill="#ddd"/></svg>
<div class="s" style="left:109px;top:660px;color:#e8e8e8;font-size:16px;transform:scaleX(.9);-webkit-text-stroke:.5px #e8e8e8">colors</div>
<div class="a" style="left:41px;top:683px;width:930px;height:87px;background:#414141"></div>
<div class="a" style="left:42px;top:684px;width:714px;height:47px;background:#2f2f2f;border:2px solid #555;border-right:none;box-shadow:inset 0 0 0 2px #262626"></div>
<div class="a" style="left:48.0px;top:690px;width:107px;height:37px;background:#ffffff"></div>
<div class="a" style="left:57.0px;top:719.5px;width:6.5px;height:7.5px;background:#111"></div>
<div class="a" style="left:71.5px;top:719.5px;width:6.5px;height:7.5px;background:#111"></div>
<div class="a" style="left:86.0px;top:719.5px;width:6.5px;height:7.5px;background:#111"></div>
<div class="a" style="left:100.5px;top:719.5px;width:6.5px;height:7.5px;background:#111"></div>
<div class="a" style="left:115.0px;top:719.5px;width:6.5px;height:7.5px;background:#111"></div>
<div class="a" style="left:129.5px;top:719.5px;width:6.5px;height:7.5px;background:#111"></div>
<svg class="a" style="left:91.5px;top:689px" width="20" height="11"><path d="M1 1 H19 Q18 10 10 10 Q2 10 1 1 Z" fill="#9a9a9a" stroke="#555" stroke-width="1"/><text x="10" y="8" font-size="7" text-anchor="middle" fill="#666" font-family="Liberation Sans">1</text></svg>
<div class="s" style="left:81.5px;top:701.5px;color:#444;font-size:15px;transform:scaleX(.86)">color_0</div>
<div class="a" style="left:141.5px;top:708.5px;width:13.5px;height:18.5px;background:#fff;border:1px solid #777"></div>
<div class="s" style="left:144.0px;top:711px;color:#333;font-size:15px;transform:scaleX(.9)">0</div>
<div class="a" style="left:166.8px;top:690px;width:107px;height:37px;background:#000000"></div>
<svg class="a" style="left:210.3px;top:689px" width="20" height="11"><path d="M1 1 H19 Q18 10 10 10 Q2 10 1 1 Z" fill="#9a9a9a" stroke="#555" stroke-width="1"/><text x="10" y="8" font-size="7" text-anchor="middle" fill="#666" font-family="Liberation Sans">2</text></svg>
<div class="s" style="left:200.3px;top:701.5px;color:#e0e0e0;font-size:15px;transform:scaleX(.86)">color_1</div>
<div class="a" style="left:260.3px;top:708.5px;width:13.5px;height:18.5px;background:#fff;border:1px solid #777"></div>
<div class="s" style="left:262.8px;top:711px;color:#111;font-size:15px;transform:scaleX(.9)">1</div>
<div class="a" style="left:285.6px;top:690px;width:107px;height:37px;background:#ff3c00"></div>
<svg class="a" style="left:329.1px;top:689px" width="20" height="11"><path d="M1 1 H19 Q18 10 10 10 Q2 10 1 1 Z" fill="#9a9a9a" stroke="#555" stroke-width="1"/><text x="10" y="8" font-size="7" text-anchor="middle" fill="#666" font-family="Liberation Sans">3</text></svg>
<div class="s" style="left:319.1px;top:701.5px;color:#f4b070;font-size:15px;transform:scaleX(.86)">color_2</div>
<div class="a" style="left:379.1px;top:708.5px;width:13.5px;height:18.5px;background:#fff;border:1px solid #777"></div>
<div class="s" style="left:381.6px;top:711px;color:#333;font-size:15px;transform:scaleX(.9)">2</div>
<div class="a" style="left:404.4px;top:690px;width:107px;height:37px;background:#0a2ff0"></div>
<svg class="a" style="left:447.9px;top:689px" width="20" height="11"><path d="M1 1 H19 Q18 10 10 10 Q2 10 1 1 Z" fill="#9a9a9a" stroke="#555" stroke-width="1"/><text x="10" y="8" font-size="7" text-anchor="middle" fill="#666" font-family="Liberation Sans">4</text></svg>
<div class="s" style="left:437.9px;top:701.5px;color:#b8d8ff;font-size:15px;transform:scaleX(.86)">color_3</div>
<div class="a" style="left:497.9px;top:708.5px;width:13.5px;height:18.5px;background:#fff;border:1px solid #777"></div>
<div class="s" style="left:500.4px;top:711px;color:#333;font-size:15px;transform:scaleX(.9)">3</div>
<div class="a" style="left:523.2px;top:690px;width:107px;height:37px;background:#ffa012"></div>
<svg class="a" style="left:566.7px;top:689px" width="20" height="11"><path d="M1 1 H19 Q18 10 10 10 Q2 10 1 1 Z" fill="#9a9a9a" stroke="#555" stroke-width="1"/><text x="10" y="8" font-size="7" text-anchor="middle" fill="#666" font-family="Liberation Sans">5</text></svg>
<div class="s" style="left:556.7px;top:701.5px;color:#c04040;font-size:15px;transform:scaleX(.86)">color_4</div>
<div class="a" style="left:616.7px;top:708.5px;width:13.5px;height:18.5px;background:#fff;border:1px solid #777"></div>
<div class="s" style="left:619.2px;top:711px;color:#333;font-size:15px;transform:scaleX(.9)">4</div>
<div class="a" style="left:635.0px;top:684px;width:118px;height:50px;background:#fafafa;border-radius:5px"></div>
<div class="a" style="left:640.0px;top:689px;width:108px;height:39px;background:#3a70b0"></div>
<div class="a" style="left:642.0px;top:690px;width:107px;height:37px;background:#22b6f2"></div>
<div class="a" style="left:645.0px;top:693px;width:101px;height:31px;border:1px dotted #8fd4f8"></div>
<svg class="a" style="left:685.5px;top:689px" width="20" height="11"><path d="M1 1 H19 Q18 10 10 10 Q2 10 1 1 Z" fill="#9a9a9a" stroke="#555" stroke-width="1"/><text x="10" y="8" font-size="7" text-anchor="middle" fill="#666" font-family="Liberation Sans">6</text></svg>
<div class="s" style="left:675.5px;top:701.5px;color:#3a70b0;font-size:15px;transform:scaleX(.86)">color_5</div>
<div class="a" style="left:735.5px;top:708.5px;width:13.5px;height:18.5px;background:#fff;border:1px solid #777"></div>
<div class="s" style="left:738.0px;top:711px;color:#333;font-size:15px;transform:scaleX(.9)">5</div>
<div class="a" style="left:759px;top:690px;width:108px;height:38px;background:#353535;border:2px solid #5c5c5c;box-shadow:inset 0 0 0 1.5px #242424"></div>
<svg class="a" style="left:804px;top:701px" width="16" height="16"><path d="M8 2 V14 M2 8 H14" stroke="#aaa" stroke-width="2"/></svg>
<div class="a" style="left:955px;top:684px;width:15px;height:86px;background:#3a3a3a"></div>
<svg class="a" style="left:957px;top:689px" width="10" height="7"><polygon points="0,7 10,7 5,0" fill="#ccc"/></svg>
<svg class="a" style="left:957px;top:756px" width="10" height="7"><polygon points="0,0 10,0 5,7" fill="#ccc"/></svg>
<div class="a" style="left:957px;top:700px;width:11px;height:50px;background:#555;border-radius:5px"></div>
<div class="a" style="left:41px;top:770px;width:930px;height:14px;background:#3a3a3a;border-top:1px solid #333"></div>
<svg class="a" style="left:41px;top:770px" width="930" height="14">
<g fill="#ddd" stroke="#ddd">
<path d="M11 12 H19 M20 8 L24 4 M21 4 H24 V7" fill="none" stroke-width="1.4" stroke-dasharray="1.5 1"/>
<path d="M41 14 V6 Q41 3 44 3 H54 L59 7 V14 Z" stroke="none"/><rect x="45" y="7" width="8" height="2.5" fill="#333" stroke="none"/>
<path d="M66 14 V6 Q66 3 69 3 H79 L84 7 V14 Z" stroke="none"/><rect x="70" y="7" width="8" height="2.5" fill="#333" stroke="none"/>
</g>
<g stroke="#333" stroke-width="1"><line x1="751" y1="0" x2="751" y2="14"/><line x1="831" y1="0" x2="831" y2="14"/></g>
<path d="M770 13 L764 8" stroke="#555" stroke-width="1.5"/>
<path d="M785 13 L792 6 L799 13" fill="none" stroke="#ddd" stroke-width="1.8"/>
<path d="M812 8 L818 13" stroke="#555" stroke-width="1.5"/>
<rect x="838" y="5" width="14" height="10" fill="none" stroke="#ddd" stroke-width="1.8"/>
<rect x="863" y="5" width="14" height="10" fill="none" stroke="#ddd" stroke-width="1.8"/><path d="M870 5 V9 H877" fill="none" stroke="#ddd" stroke-width="1.4"/>
<path d="M889 9 H902 M889 13 H902" stroke="#ddd" stroke-width="1.8"/>
<path d="M916 14 V9 Q916 5 920 5 Q924 5 924 9 V14" fill="none" stroke="#ddd" stroke-width="1.8"/>
</svg><div class="a" style="left:971px;top:523px;width:5px;height:261px;background:#2d2d2d"></div>
<div class="a" style="left:976px;top:523px;width:230px;height:261px;background:#434343"></div>
<div class="a" style="left:1206px;top:523px;width:4px;height:261px;background:#2f2f2f"></div>
<div class="a" style="left:1210px;top:523px;width:20px;height:261px;background:#3b3b3b"></div>
<div class="a" style="left:1210px;top:631px;width:20px;height:1px;background:#333"></div>
<div class="a" style="left:998px;top:523px;width:45px;height:4px;background:#333"></div>
<div class="a" style="left:1077px;top:523px;width:93px;height:3px;background:linear-gradient(to right,#8a6a40,#9a9a9a 40%,#3a5a8a 60%,#777)"></div>
<svg class="a" style="left:1117px;top:522px" width="14" height="8"><polygon points="1,7 13,7 7,0" fill="#ddd" stroke="#222" stroke-width="1"/></svg>
<div class="s" style="left:981px;top:540px;color:#e0e0e0;font-size:16px;transform:scaleX(.82)">S</div>
<div class="a" style="left:998px;top:535px;width:45px;height:23px;background:#313131"></div>
<div class="s" style="left:1003px;top:540px;color:#eee;font-size:16px;transform:scaleX(.82)">87</div>
<svg class="a" style="left:1055px;top:543px" width="7" height="10"><polygon points="6,0 6,10 0,5" fill="#aaa"/></svg>
<svg class="a" style="left:1186px;top:543px" width="7" height="10"><polygon points="0,0 0,10 6,5" fill="#aaa"/></svg>
<div class="a" style="left:1075px;top:534px;width:96px;height:23px;background:linear-gradient(to right,#f8f8f8,#dbe8ef 25%,#c8dde8 40%,#6ccdf6 50%,#5ac6f4 70%,#22b4f0)"></div>
<div class="a" style="left:1075px;top:554px;width:96px;height:4px;background:linear-gradient(to bottom,rgba(20,60,110,.0),rgba(20,60,110,.7))"></div>
<svg class="a" style="left:1152px;top:551px" width="14" height="9"><polygon points="1,8 13,8 7,1" fill="#dde8f0" stroke="#1e2a3a" stroke-width="1.2"/></svg>
<div class="s" style="left:981px;top:569px;color:#e0e0e0;font-size:16px;transform:scaleX(.82)">V</div>
<div class="a" style="left:998px;top:565px;width:45px;height:23px;background:#313131"></div>
<div class="s" style="left:1003px;top:569px;color:#eee;font-size:16px;transform:scaleX(.82)">100</div>
<svg class="a" style="left:1055px;top:572px" width="7" height="10"><polygon points="6,0 6,10 0,5" fill="#aaa"/></svg>
<svg class="a" style="left:1186px;top:572px" width="7" height="10"><polygon points="0,0 0,10 6,5" fill="#aaa"/></svg>
<div class="a" style="left:1075px;top:565px;width:96px;height:20px;background:linear-gradient(to right,#050505,#111 15%,#1e3550 35%,#2a5e8e 55%,#3a84bc 75%,#1eb2ee)"></div>
<div class="a" style="left:1075px;top:582px;width:96px;height:4px;background:linear-gradient(to bottom,rgba(20,60,110,.0),rgba(20,60,110,.7))"></div>
<svg class="a" style="left:1164px;top:579px" width="14" height="9"><polygon points="1,8 13,8 7,1" fill="#dde8f0" stroke="#1e2a3a" stroke-width="1.2"/></svg>
<div class="s" style="left:981px;top:604px;color:#e0e0e0;font-size:16px;transform:scaleX(.82)">A</div>
<div class="a" style="left:998px;top:600px;width:45px;height:23px;background:#313131"></div>
<div class="s" style="left:1003px;top:604px;color:#eee;font-size:16px;transform:scaleX(.82)">255</div>
<svg class="a" style="left:1055px;top:607px" width="7" height="10"><polygon points="6,0 6,10 0,5" fill="#aaa"/></svg>
<svg class="a" style="left:1186px;top:607px" width="7" height="10"><polygon points="0,0 0,10 6,5" fill="#aaa"/></svg>
<div class="a" style="left:1075px;top:599px;width:96px;height:21px;background:repeating-conic-gradient(#c8c8c8 0 25%,#eee 0 50%) 0 0/8px 8px"></div>
<div class="a" style="left:1075px;top:599px;width:96px;height:21px;background:linear-gradient(to right,rgba(34,180,240,0),rgba(34,180,240,.4) 40%,rgba(34,180,240,.9) 75%,#22b4f0)"></div>
<div class="a" style="left:1075px;top:617px;width:96px;height:4px;background:linear-gradient(to bottom,rgba(20,60,110,.0),rgba(20,60,110,.7))"></div>
<svg class="a" style="left:1164px;top:614px" width="14" height="9"><polygon points="1,8 13,8 7,1" fill="#dde8f0" stroke="#1e2a3a" stroke-width="1.2"/></svg>
<div class="s" style="left:981px;top:638px;color:#e0e0e0;font-size:16px;transform:scaleX(.82)">R</div>
<div class="a" style="left:998px;top:635px;width:45px;height:23px;background:#313131"></div>
<div class="s" style="left:1003px;top:638px;color:#eee;font-size:16px;transform:scaleX(.82)">33</div>
<svg class="a" style="left:1055px;top:641px" width="7" height="10"><polygon points="6,0 6,10 0,5" fill="#aaa"/></svg>
<svg class="a" style="left:1186px;top:641px" width="7" height="10"><polygon points="0,0 0,10 6,5" fill="#aaa"/></svg>
<div class="a" style="left:1075px;top:634px;width:96px;height:21px;background:linear-gradient(to right,#1eb6f0,#36bcf2 30%,#6fd0f6 50%,#c8dde8 75%,#fafafa)"></div>
<div class="a" style="left:1075px;top:652px;width:96px;height:4px;background:linear-gradient(to bottom,rgba(20,60,110,.0),rgba(20,60,110,.7))"></div>
<svg class="a" style="left:1082px;top:649px" width="14" height="9"><polygon points="1,8 13,8 7,1" fill="#dde8f0" stroke="#1e2a3a" stroke-width="1.2"/></svg>
<div class="s" style="left:981px;top:668px;color:#e0e0e0;font-size:16px;transform:scaleX(.82)">G</div>
<div class="a" style="left:998px;top:664px;width:45px;height:23px;background:#313131"></div>
<div class="s" style="left:1003px;top:668px;color:#eee;font-size:16px;transform:scaleX(.82)">255</div>
<svg class="a" style="left:1055px;top:671px" width="7" height="10"><polygon points="6,0 6,10 0,5" fill="#aaa"/></svg>
<svg class="a" style="left:1186px;top:671px" width="7" height="10"><polygon points="0,0 0,10 6,5" fill="#aaa"/></svg>
<div class="a" style="left:1075px;top:663px;width:96px;height:22px;background:linear-gradient(to right,#0018f8,#0a2af0 20%,#1e5ef0 45%,#3a8ae0 75%,#22b4f0)"></div>
<div class="a" style="left:1075px;top:682px;width:96px;height:4px;background:linear-gradient(to bottom,rgba(20,60,110,.0),rgba(20,60,110,.7))"></div>
<svg class="a" style="left:1164px;top:679px" width="14" height="9"><polygon points="1,8 13,8 7,1" fill="#dde8f0" stroke="#1e2a3a" stroke-width="1.2"/></svg>
<div class="s" style="left:981px;top:696px;color:#e0e0e0;font-size:16px;transform:scaleX(.82)">B</div>
<div class="a" style="left:998px;top:693px;width:45px;height:23px;background:#313131"></div>
<div class="s" style="left:1003px;top:696px;color:#eee;font-size:16px;transform:scaleX(.82)">255</div>
<svg class="a" style="left:1055px;top:699px" width="7" height="10"><polygon points="6,0 6,10 0,5" fill="#aaa"/></svg>
<svg class="a" style="left:1186px;top:699px" width="7" height="10"><polygon points="0,0 0,10 6,5" fill="#aaa"/></svg>
<div class="a" style="left:1075px;top:692px;width:96px;height:21px;background:linear-gradient(to right,#1e9a1e,#22a028 35%,#4aa878 50%,#3aa6c8 75%,#22b4f0)"></div>
<div class="a" style="left:1075px;top:710px;width:96px;height:4px;background:linear-gradient(to bottom,rgba(20,60,110,.0),rgba(20,60,110,.7))"></div>
<svg class="a" style="left:1164px;top:707px" width="14" height="9"><polygon points="1,8 13,8 7,1" fill="#dde8f0" stroke="#1e2a3a" stroke-width="1.2"/></svg>
<div class="a" style="left:976px;top:593px;width:230px;height:2px;background:#363636"></div>
<div class="a" style="left:976px;top:628px;width:230px;height:2px;background:#363636"></div>
<div class="a" style="left:976px;top:722px;width:230px;height:2px;background:#363636"></div>
<div class="a" style="left:980px;top:731px;width:45px;height:53px;background:#333"></div>
<div class="s" style="left:985px;top:750px;color:#eee;font-size:16px;transform:scaleX(.86);-webkit-text-stroke:.4px #eee">Auto</div>
<div class="a" style="left:1030px;top:731px;width:52px;height:53px;background:#4a4a4a"></div>
<div class="s" style="left:1038px;top:750px;color:#6a6a6a;font-size:16px;transform:scaleX(.86)">Apply</div>
<div class="a" style="left:1086px;top:727px;width:80px;height:57px;background:#1fb6f0;border-left:1px solid #3a6a9a"></div>
<div class="a" style="left:1149px;top:728px;width:57px;height:23px;background:#2c2c2c"></div>
<div class="s" style="left:1152px;top:733px;color:#eee;font-size:15px;transform:scaleX(.82);-webkit-text-stroke:.4px #eee">#21FFFF</div>
<svg class="a" style="left:1181px;top:765px" width="17" height="14"><path d="M1 2.5 H16 M1 6.5 H16 M1 10.5 H16" stroke="#ddd" stroke-width="2"/></svg><!-- video play overlay -->
<div class="a" style="left:780.5px;top:358px;width:65px;height:65px;border-radius:50%;background:rgba(32,32,38,.78)"></div>
<svg class="a" style="left:804px;top:377px" width="22" height="26"><polygon points="1,1 21,13 1,25" fill="#a8a8a8"/></svg>
<div class="a" style="left:782px;top:385px;width:60px;height:30px;overflow:hidden"><div class="r" style="right:18px;top:7px;color:#5d86b8;transform:scaleX(.82)">More Settings</div></div>
<!-- yellow highlight -->
<div class="a" style="left:513px;top:420px;width:99px;height:100px;border-radius:50%;background:rgba(252,210,40,.69);box-shadow:0 0 0 1.5px rgba(110,95,50,.55)"></div>
<!-- cursors -->
<svg class="a" style="left:562px;top:467px" width="16" height="24"><path d="M1.5 1.5 L1.5 18 L5.5 14.5 L8.5 21.5 L11 20.5 L8 13.5 L13 13.5 Z" fill="#fafafa" stroke="#222" stroke-width="1.2" stroke-linejoin="round"/></svg>
<svg class="a" style="left:327px;top:619px" width="16" height="24"><path d="M1.5 1.5 L1.5 18 L5.5 14.5 L8.5 21.5 L11 20.5 L8 13.5 L13 13.5 Z" fill="#fafafa" stroke="#222" stroke-width="1.2" stroke-linejoin="round"/></svg>
</body></html>
